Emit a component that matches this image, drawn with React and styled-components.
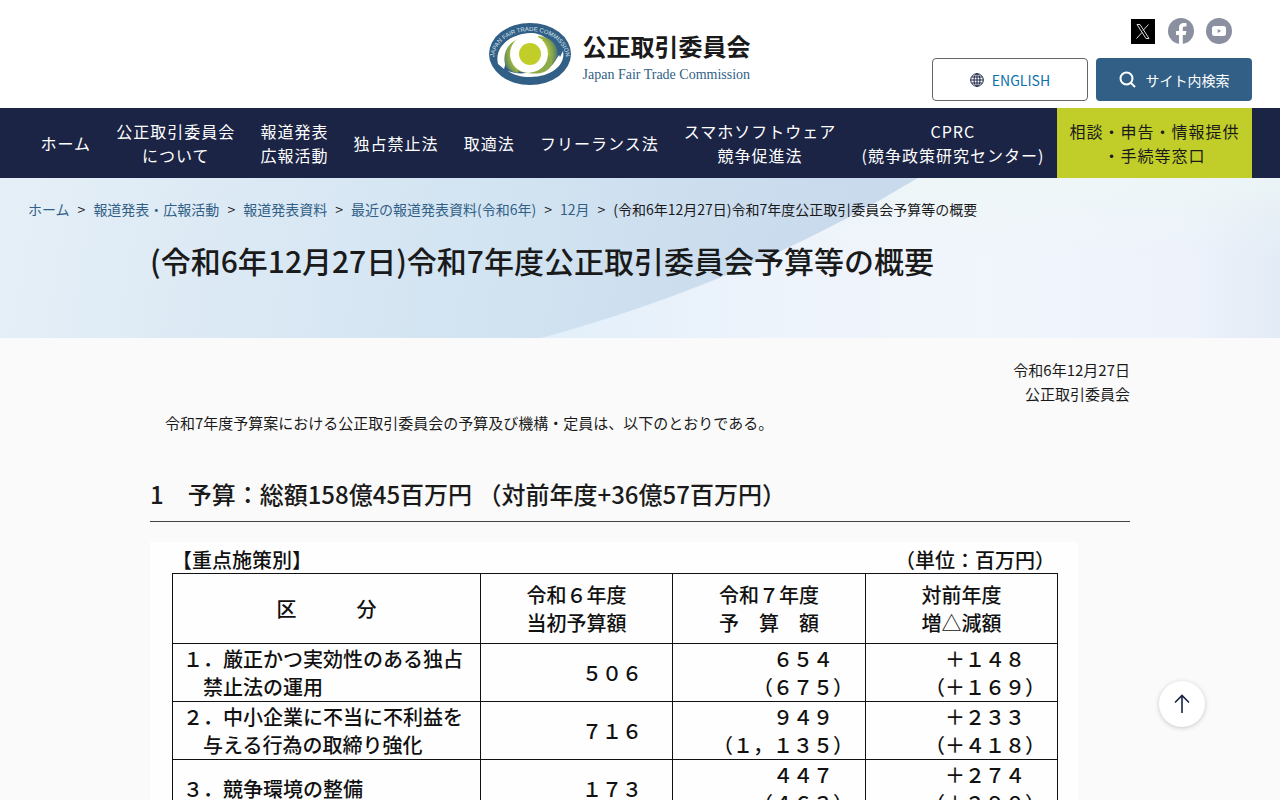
import React from 'react';
import styled, { createGlobalStyle, css } from 'styled-components';

const GlobalStyle = createGlobalStyle`
  *,
  *::before,
  *::after {
    box-sizing: border-box;
  }

  body {
    margin: 0;
    background: #fafafa;
    color: #1a1a1a;
    font-family: 'Noto Sans CJK JP', sans-serif;
    font-size: 15px;
    line-height: 24px;
  }

  a {
    color: inherit;
    text-decoration: none;
  }

  h1,
  h2,
  p,
  ul,
  ol {
    margin: 0;
    padding: 0;
  }

  ul,
  ol {
    list-style: none;
  }
`;

const StyledHeader = styled.header`
  display: grid;
  grid-template-columns: 1fr auto 1fr;
  height: 108px;
  padding: 0 28px;
  background: #fff;
`;

const Brand = styled.a`
  grid-column: 2;
  display: flex;
  align-items: center;
  align-self: center;
  gap: 11px;
  padding-right: 42px;

  svg {
    display: block;
    width: 84px;
    height: 64px;
  }
`;

const BrandText = styled.span`
  display: flex;
  flex-direction: column;
  padding-top: 4px;

  strong {
    font-size: 24px;
    font-weight: 700;
    line-height: 38px;
  }

  span {
    color: #315f86;
    font-family: 'Liberation Serif', serif;
    font-size: 14px;
    line-height: 20px;
  }
`;

const HeaderTools = styled.div`
  grid-column: 3;
  justify-self: end;
  display: flex;
  flex-direction: column;
  align-items: flex-end;
  gap: 14px;
  padding-top: 18px;
`;

const SocialList = styled.ul`
  display: flex;
  gap: 12px;
  padding-right: 20px;

  svg {
    display: block;
    width: 26px;
    height: 26px;
  }
`;

const ToolButtons = styled.div`
  display: flex;
  gap: 8px;
`;

const toolButton = css`
  display: flex;
  align-items: center;
  justify-content: center;
  width: 156px;
  height: 43px;
  padding: 0;
  border-radius: 4px;
  font-family: inherit;
  font-size: 14px;
`;

const LanguageLink = styled.a`
  ${toolButton};
  gap: 8px;
  border: 1px solid #666;
  background: #fff;
  color: #0b70ae;
`;

const SearchButton = styled.button`
  ${toolButton};
  gap: 10px;
  border: 0;
  background: #315f86;
  color: #fff;
`;

const StyledNav = styled.nav`
  padding: 0 28px;
  background: #1b2445;

  ul {
    display: flex;
    min-height: 70px;
  }

  li {
    display: flex;
    flex: 1 1 auto;
  }
`;

const NavLink = styled.a`
  display: flex;
  flex: 1;
  align-items: center;
  justify-content: center;
  padding: 0 12px;
  background: ${({ $accent }) => ($accent ? '#c1ce2a' : 'transparent')};
  color: ${({ $accent }) => ($accent ? '#1a1a1a' : '#fff')};
  font-size: 16px;
  letter-spacing: 1px;
  text-align: center;
  white-space: pre-line;
`;

const StyledHero = styled.section`
  position: relative;
  min-height: 160px;
  padding: 19px 28px;
  background: linear-gradient(100deg, #e5eff7 0%, #d3e4f2 36%, #c8daec 65%);

  > svg {
    position: absolute;
    inset: 0;
    width: 100%;
    height: 100%;
  }
`;

const Breadcrumb = styled.ol`
  position: relative;
  display: flex;
  flex-wrap: wrap;
  font-size: 14px;

  a {
    color: #315f86;
  }

  li + li::before {
    content: '>';
    margin: 0 8px;
  }
`;

const Container = styled.div`
  position: relative;
  max-width: 980px;
  margin: 0 auto;
`;

const PageTitle = styled.h1`
  padding-top: 16px;
  font-size: 30px;
  font-weight: 500;
  line-height: 46px;
`;

const Issued = styled.div`
  padding-top: 20px;
  text-align: right;
`;

const Lead = styled.p`
  padding: 5px 15px 0;
`;

const SectionTitle = styled.h2`
  margin: 41px 0 20px;
  padding-bottom: 9px;
  border-bottom: 1px solid #444;
  font-size: 24px;
  font-weight: 500;
  line-height: 36px;
`;

const Sheet = styled.div`
  max-width: 928px;
  padding: 4px 21px 20px 22px;
  background: #fefefe;
  color: #111;
  font-size: 20px;
  font-weight: 500;
  line-height: 28px;
`;

const SheetCaption = styled.div`
  display: flex;
  justify-content: space-between;
  height: 27px;
  padding-right: 2px;
`;

const BudgetTable = styled.table`
  width: 100%;
  border-collapse: collapse;
  table-layout: fixed;
  white-space: pre;

  th,
  td {
    height: 58px;
    padding: 1px 0 0;
    border: 1px solid #111;
    font-weight: 500;
    text-align: left;
  }

  thead th {
    height: 70px;
    text-align: center;
  }

  tbody th {
    padding-left: 10px;
  }
`;

const Amount = styled.td`
  && {
    padding-right: ${({ $inset }) => $inset};
    text-align: right;
  }
`;

const TopLink = styled.a`
  position: fixed;
  right: 75px;
  bottom: 73px;
  display: flex;
  align-items: center;
  justify-content: center;
  width: 46px;
  height: 46px;
  border-radius: 50%;
  background: #fff;
  box-shadow: 0 1px 5px rgba(0, 0, 0, 0.2);
`;

const LogoMark = () => (
  <svg viewBox="0 0 84 64" aria-hidden="true">
    <defs>
      <radialGradient id="leaf" gradientUnits="userSpaceOnUse" cx="42" cy="32" r="29">
        <stop offset="60%" stopColor="#b4c634" />
        <stop offset="80%" stopColor="#7f9f50" />
        <stop offset="100%" stopColor="#3d6b78" />
      </radialGradient>
      <path id="arc" d="M6 37A36 28 0 0 1 78 37" />
    </defs>
    <ellipse cx="42" cy="32" rx="41" ry="31" fill="#315f86" />
    {/* hands wrapped round the leaves */}
    <path d="M10 42C6 25 22 12 42 11c7 0 12 2 16 5-8 0-14 1-20 4L22 44l-4-4-2 7z" fill="#fff" />
    <path d="M75 29c3 14-12 26-33 26-9 0-16-2-22-6 8 3 16 3 22 1l18-6 4-8 3 3 4-6 1 2z" fill="#fff" />
    <path d="M17 42c-3-13 5-25 21-27 9-1 16 1 20 4l-22 4-6 28c-7-1-11-4-13-9z" fill="url(#leaf)" />
    <path d="M50 14c14 1 22 11 19 21-3 9-10 14-23 15-6 1-11 1-16-1l28-14z" fill="url(#leaf)" />
    <path d="M27 20c8-6 19-7 28-2-8-1-14 0-20 4z" fill="#fff" />
    <circle cx="41" cy="32" r="19" fill="#fff" />
    <path d="M60 33c0 10-8 17-20 18 12 2 21-1 24-9 1-4-1-7-4-9z" fill="#8fab49" />
    <circle cx="42" cy="32" r="11" fill="#c1ce2a" />
    <text fill="#dbe6ee" fontFamily="Liberation Sans, sans-serif" fontSize="6">
      <textPath href="#arc" startOffset="50%" textAnchor="middle">
        JAPAN FAIR TRADE COMMISSION
      </textPath>
    </text>
  </svg>
);

const IconX = () => (
  <svg viewBox="0 0 26 26" aria-hidden="true">
    <path fill="#000" d="M1 1h24v25H1z" />
    <path fill="none" stroke="#ddd" d="M7 6.500h3l9 14h-3zM18.500 6.500l-5.500 6M12 14.500l-5.500 6" />
  </svg>
);

const IconFacebook = () => (
  <svg viewBox="0 0 26 26" aria-hidden="true">
    <circle cx="13" cy="13" r="13" fill="#8b90a0" />
    <path fill="#fff" d="M11 26v-9H8v-4h3v-3c0-3.500 2-5 5-5 1 0 2 .1 2.500.2v3.300h-2c-1.300 0-1.700.7-1.700 1.700V13h3.500l-.6 4h-2.900v9z" />
  </svg>
);

const IconYoutube = () => (
  <svg viewBox="0 0 26 26" aria-hidden="true">
    <circle cx="13" cy="13" r="13" fill="#8b90a0" />
    <rect x="6" y="8" width="14" height="10" rx="2.500" fill="#fff" />
    <path fill="#8b90a0" d="M11.700 11v4l3.500-2z" />
  </svg>
);

const IconGlobe = () => (
  <svg width="14" height="14" viewBox="0 0 14 14" fill="none" stroke="#1b2445" aria-hidden="true">
    <circle cx="7" cy="7" r="6.300" />
    <ellipse cx="7" cy="7" rx="3" ry="6.300" />
    <path d="M7 .7v12.600M.7 7h12.600M1.700 4h10.600M1.700 10h10.600" />
  </svg>
);

const IconSearch = () => (
  <svg width="17" height="17" viewBox="0 0 17 17" fill="none" stroke="#fff" strokeWidth="2" aria-hidden="true">
    <circle cx="7.500" cy="7.500" r="6" />
    <path d="M12 12l4 4" />
  </svg>
);

const IconArrowUp = () => (
  <svg width="16" height="20" viewBox="0 0 16 20" fill="none" stroke="#1b2445" strokeWidth="1.600" aria-hidden="true">
    <path d="M8 19V1.500M1 8.500l7-7 7 7" />
  </svg>
);

const social = [
  { name: 'X', Icon: IconX },
  { name: 'Facebook', Icon: IconFacebook },
  { name: 'YouTube', Icon: IconYoutube },
];

const navItems = [
  'ホーム',
  '公正取引委員会\nについて',
  '報道発表\n広報活動',
  '独占禁止法',
  '取適法',
  'フリーランス法',
  'スマホソフトウェア\n競争促進法',
  'CPRC\n(競争政策研究センター)',
  '相談・申告・情報提供\n・手続等窓口',
];

const crumbs = ['ホーム', '報道発表・広報活動', '報道発表資料', '最近の報道発表資料(令和6年)', '12月'];

const title = '(令和6年12月27日)令和7年度公正取引委員会予算等の概要';

const budget = [
  {
    label: '１．厳正かつ実効性のある独占\n　禁止法の運用',
    before: '５０６',
    after: '６５４　\n（６７５）',
    diff: '＋１４８　\n（＋１６９）',
  },
  {
    label: '２．中小企業に不当に不利益を\n　与える行為の取締り強化',
    before: '７１６',
    after: '９４９　\n（１，１３５）',
    diff: '＋２３３　\n（＋４１８）',
  },
  {
    label: '３．競争環境の整備',
    before: '１７３',
    after: '４４７　\n（４６３）',
    diff: '＋２７４　\n（＋２９０）',
  },
];

const Header = () => (
  <StyledHeader>
    <Brand href="#">
      <LogoMark />
      <BrandText>
        <strong>公正取引委員会</strong>
        <span>Japan Fair Trade Commission</span>
      </BrandText>
    </Brand>
    <HeaderTools>
      <SocialList>
        {social.map(({ name, Icon }) => (
          <li key={name}>
            <a href="#" aria-label={name}>
              <Icon />
            </a>
          </li>
        ))}
      </SocialList>
      <ToolButtons>
        <LanguageLink href="#">
          <IconGlobe />
          ENGLISH
        </LanguageLink>
        <SearchButton type="button">
          <IconSearch />
          サイト内検索
        </SearchButton>
      </ToolButtons>
    </HeaderTools>
  </StyledHeader>
);

const Nav = () => (
  <StyledNav>
    <ul>
      {navItems.map((item, i) => (
        <li key={item}>
          <NavLink href="#" $accent={i === navItems.length - 1}>
            {item}
          </NavLink>
        </li>
      ))}
    </ul>
  </StyledNav>
);

const Hero = () => (
  <StyledHero>
    <svg viewBox="0 0 1280 160" preserveAspectRatio="none" aria-hidden="true">
      <defs>
        <linearGradient id="sheen" x1="0" y1="0" x2="1" y2="0">
          <stop offset="0%" stopColor="#e2effa" />
          <stop offset="30%" stopColor="#edf3fb" />
          <stop offset="60%" stopColor="#f1f5fc" />
          <stop offset="88%" stopColor="#edf2fb" />
          <stop offset="100%" stopColor="#e3ebf6" />
        </linearGradient>
        <linearGradient id="mist" x1="0" y1="0" x2="0" y2="1">
          <stop offset="0%" stopColor="#edf6f6" stopOpacity="0.8" />
          <stop offset="50%" stopColor="#edf6f6" stopOpacity="0" />
        </linearGradient>
      </defs>
      <path fill="url(#sheen)" d="M918 0Q745 105 541 160H1280V0z" />
      <path fill="url(#mist)" d="M918 0Q745 105 541 160H1280V0z" />
    </svg>
    <Breadcrumb>
      {crumbs.map(crumb => (
        <li key={crumb}>
          <a href="#">{crumb}</a>
        </li>
      ))}
      <li>{title}</li>
    </Breadcrumb>
    <Container>
      <PageTitle>{title}</PageTitle>
    </Container>
  </StyledHero>
);

const Budget = () => (
  <Sheet>
    <SheetCaption>
      <span>【重点施策別】</span>
      <span>（単位：百万円）</span>
    </SheetCaption>
    <BudgetTable>
      <colgroup>
        <col width="308" />
        <col width="192" />
        <col width="193" />
        <col width="192" />
      </colgroup>
      <thead>
        <tr>
          <th>区　　　分</th>
          <th>{'令和６年度\n当初予算額'}</th>
          <th>{'令和７年度\n予　算　額'}</th>
          <th>{'対前年度\n増△減額'}</th>
        </tr>
      </thead>
      <tbody>
        {budget.map(({ label, before, after, diff }) => (
          <tr key={label}>
            <th>{label}</th>
            <Amount $inset="30px">{before}</Amount>
            <Amount $inset="12px">{after}</Amount>
            <Amount $inset="12px">{diff}</Amount>
          </tr>
        ))}
      </tbody>
    </BudgetTable>
  </Sheet>
);

const App = () => (
  <>
    <GlobalStyle />
    <Header />
    <Nav />
    <main>
      <Hero />
      <Container>
        <Issued>
          <p>令和6年12月27日</p>
          <p>公正取引委員会</p>
        </Issued>
        <Lead>令和7年度予算案における公正取引委員会の予算及び機構・定員は、以下のとおりである。</Lead>
        <SectionTitle>1　予算：総額158億45百万円 （対前年度+36億57百万円）</SectionTitle>
        <Budget />
      </Container>
    </main>
    <TopLink href="#" aria-label="ページの先頭へ">
      <IconArrowUp />
    </TopLink>
  </>
);

export default App;
